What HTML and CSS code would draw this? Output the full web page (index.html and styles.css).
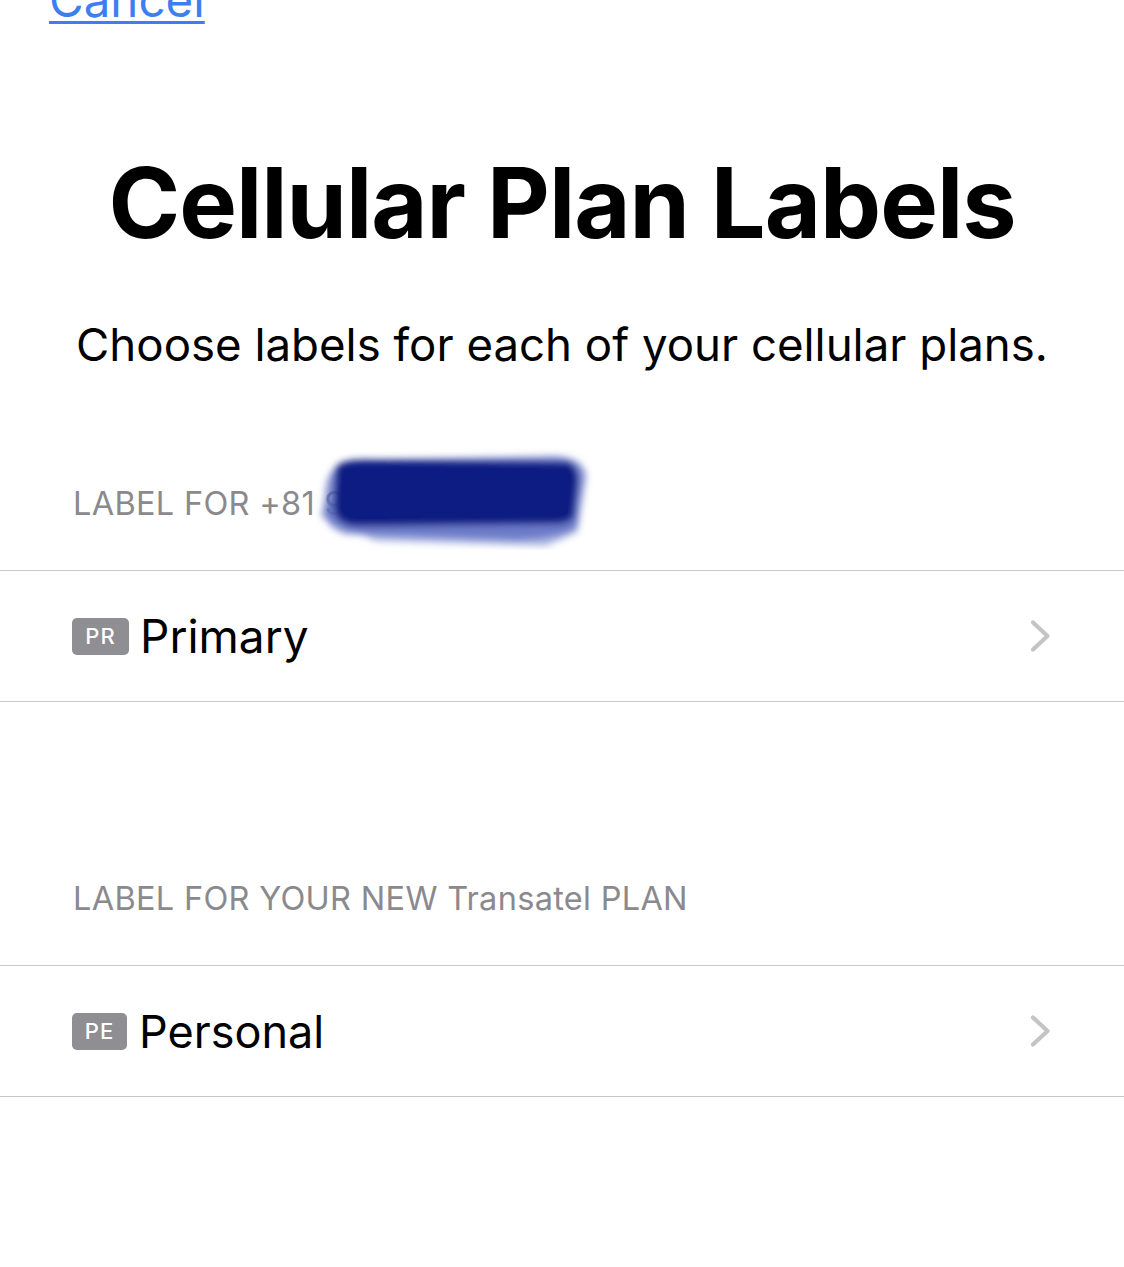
FILE: index.html
```html
<!DOCTYPE html>
<html>
<head>
<meta charset="utf-8">
<link rel="stylesheet" href="styles.css">
</head>
<body>
<div class="page">
  <a class="cancel" href="#">Cancel</a>
  <h1 class="title">Cellular Plan Labels</h1>
  <p class="subtitle">Choose labels for each of your cellular plans.</p>

  <section class="group first">
    <div class="group-header"><span class="number">LABEL FOR +81 9<svg class="scribble" viewBox="0 0 280 104" width="280" height="104"><defs><filter id="b" x="-10%" y="-20%" width="120%" height="140%"><feGaussianBlur stdDeviation="3.5"/></filter></defs><g filter="url(#b)"><path d="M4 70 L60 95 L230 100 L262 86 L260 60 L10 55 Z" fill="#7f90d2" opacity="0.65"/><path d="M8 60 Q6 80 30 88 L200 94 Q250 92 262 80 L270 30 Q268 12 240 10 L40 14 Q14 16 10 40 Z" fill="#5568c0" opacity="0.75"/><path d="M20 22 Q24 12 60 14 L250 16 Q262 18 262 36 L258 70 Q254 78 236 78 L40 80 Q18 78 18 60 Z" fill="#0a1a82"/></g></svg></span></div>
    <div class="row">
      <span class="badge">PR</span>
      <span class="row-label">Primary</span>
      <svg class="chevron" viewBox="0 0 24 34" width="24" height="34"><path d="M5 3.5 L19.5 17 L5 30.5" fill="none" stroke="#c4c4c7" stroke-width="4.2" stroke-linecap="round" stroke-linejoin="round"/></svg>
    </div>
  </section>

  <section class="group second">
    <div class="group-header">LABEL FOR YOUR NEW Transatel PLAN</div>
    <div class="row">
      <span class="badge narrow">PE</span>
      <span class="row-label personal">Personal</span>
      <svg class="chevron" viewBox="0 0 24 34" width="24" height="34"><path d="M5 3.5 L19.5 17 L5 30.5" fill="none" stroke="#c4c4c7" stroke-width="4.2" stroke-linecap="round" stroke-linejoin="round"/></svg>
    </div>
  </section>
</div>
</body>
</html>
```
FILE: styles.css
```css
html, body {
  margin: 0;
  padding: 0;
  background: #ffffff;
}
body {
  font-family: Inter, "Noto Sans", "Liberation Sans", sans-serif;
  color: #000;
  overflow: hidden;
}
.page {
  display: flex;
  flex-direction: column;
  height: 1267px;
}
.cancel {
  display: block;
  align-self: flex-start;
  margin-left: 49px;
  margin-top: -30px;
  font-size: 47.5px;
  line-height: 60px;
  color: #3d7ff0;
  text-decoration: underline;
  text-decoration-thickness: 3px;
  text-underline-offset: 4px;
}
.title {
  margin: 118px 0 0;
  text-align: center;
  font-size: 97px;
  font-weight: 700;
  line-height: 110px;
  letter-spacing: -1px;
}
.subtitle {
  margin: 59px 0 0;
  text-align: center;
  font-size: 45.6px;
  line-height: 56px;
  font-weight: 400;
}
.group-header {
  padding-left: 73px;
  padding-bottom: 46px;
  font-size: 32.5px;
  line-height: 40px;
  color: #8a8a8e;
  letter-spacing: 0.3px;
}
.group.first {
  margin-top: 111px;
}
.group.second {
  margin-top: 177px;
}
.number {
  position: relative;
}
.scribble {
  position: absolute;
  left: 243px;
  top: -38px;
}
.row {
  display: flex;
  align-items: center;
  height: 130px;
  border-top: 1px solid #c8c7cc;
  border-bottom: 1px solid #c8c7cc;
  padding-left: 72px;
  padding-right: 72px;
}
.badge {
  display: inline-flex;
  align-items: center;
  justify-content: center;
  width: 57px;
  height: 37px;
  border-radius: 5px;
  background: #8e8e93;
  color: #fff;
  font-size: 22px;
  font-weight: 500;
  letter-spacing: 1px;
}
.badge.narrow {
  width: 55px;
}
.row-label {
  margin-left: 11px;
  font-size: 46px;
  flex: 1;
}
.row-label.personal {
  font-size: 45px;
  margin-left: 12px;
}
.chevron {
  flex: none;
}
```
